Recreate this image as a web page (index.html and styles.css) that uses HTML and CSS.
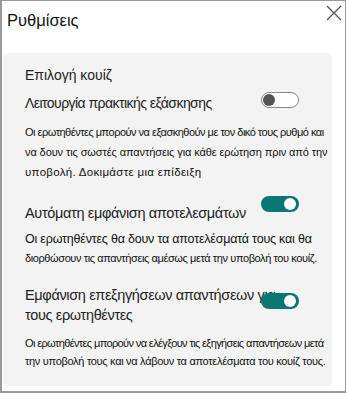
FILE: index.html
```html
<!DOCTYPE html>
<html lang="el">
<head>
<meta charset="utf-8">
<link rel="stylesheet" href="styles.css">
</head>
<body>
<div class="dialog">
  <div class="header">
    <h1 class="title">Ρυθμίσεις</h1>
    <button class="close" aria-label="Κλείσιμο">
      <svg width="16" height="16" viewBox="0 0 16 16"><path d="M1 1 L15 15 M15 1 L1 15" stroke="#555" stroke-width="1.3" fill="none"/></svg>
    </button>
  </div>
  <div class="panel">
    <div class="section-title">Επιλογή κουίζ</div>
    <div class="row row-1">
      <div class="label">Λειτουργία πρακτικής εξάσκησης</div>
      <span class="toggle toggle-off t1"><span class="knob"></span></span>
    </div>
    <p class="desc desc-1"><span class="ln l1a">Οι ερωτηθέντες μπορούν να εξασκηθούν με τον δικό τους ρυθμό και</span><span class="ln l1b">να δουν τις σωστές απαντήσεις για κάθε ερώτηση πριν από την</span><span class="ln l1c">υποβολή. Δοκιμάστε μια επίδειξη</span></p>
    <div class="row row-2">
      <div class="label">Αυτόματη εμφάνιση αποτελεσμάτων</div>
      <span class="toggle toggle-on t2"><span class="knob"></span></span>
    </div>
    <p class="desc desc-2"><span class="ln l2a">Οι ερωτηθέντες θα δουν τα αποτελέσματά τους και θα</span><span class="ln l2b">διορθώσουν τις απαντήσεις αμέσως μετά την υποβολή του κουίζ.</span></p>
    <div class="row row-3">
      <div class="label"><span class="ln">Εμφάνιση επεξηγήσεων απαντήσεων για</span><span class="ln">τους ερωτηθέντες</span></div>
      <span class="toggle toggle-on t3"><span class="knob"></span></span>
    </div>
    <p class="desc desc-3"><span class="ln l3a">Οι ερωτηθέντες μπορούν να ελέγξουν τις εξηγήσεις απαντήσεων μετά</span><span class="ln l3b">την υποβολή τους και να λάβουν τα αποτελέσματα του κουίζ τους.</span></p>
  </div>
</div>
</body>
</html>
```
FILE: styles.css
```css
html, body {
  margin: 0;
  padding: 0;
  background: #ffffff;
}
body {
  font-family: "Liberation Sans", Arial, sans-serif;
  color: #1b1b1b;
}
.dialog {
  width: 343px;
  height: 390px;
  border: 1px solid #9a9a9a;
  border-left-width: 2px;
  border-bottom-width: 2px;
  background: #fff;
  overflow: hidden;
}
.header {
  display: flex;
  justify-content: space-between;
  align-items: flex-start;
  height: 52px;
}
.title {
  margin: 8px 0 0 5px;
  font-size: 16.5px;
  line-height: 22px;
  font-weight: normal;
  color: #111;
}
.close {
  margin: 4px 3px 0 0;
  padding: 0;
  border: 0;
  background: none;
  width: 16px;
  height: 16px;
  display: flex;
}
.panel {
  margin: 0 13px 0 1px;
  background: #f3f3f3;
  border-radius: 5px;
  padding: 12px 0 16px 22px;
  overflow: hidden;
}
.ln {
  display: block;
  white-space: nowrap;
}
.section-title {
  font-size: 14px;
  line-height: 20px;
  color: #222;
}
.row {
  position: relative;
  margin-top: 8px;
}
.label {
  font-size: 14.5px;
  letter-spacing: -0.35px;
  line-height: 20px;
  color: #222;
}
.row-1 .label { font-size: 14px; letter-spacing: -0.55px; }
.row-2 { margin-top: 18px; }
.row-2 .label { position: relative; top: 3px; }
.row-3 { margin-top: 17px; }
.desc {
  margin: 9px 0 0 0;
  font-size: 11px;
  line-height: 20px;
  color: #111;
}
.l1a { letter-spacing: -0.5px; }
.l1b { letter-spacing: -0.1px; }
.l1c { font-size: 11.5px; letter-spacing: 0.3px; }
.desc-2 { margin-top: 10px; line-height: 19px; }
.l2a { font-size: 12.5px; letter-spacing: -0.2px; }
.l2b { font-size: 11px; letter-spacing: -0.4px; }
.desc-3 { margin-top: 9px; line-height: 18px; }
.l3a { font-size: 11px; letter-spacing: -0.62px; }
.l3b { font-size: 11px; letter-spacing: -0.3px; }
.toggle {
  position: absolute;
  left: 236px;
  width: 38px;
  height: 16px;
  border-radius: 9px;
  box-sizing: border-box;
}
.t1 { top: -1px; }
.t2 { top: -4px; }
.t3 { top: 8px; }
.toggle-off {
  border: 1.5px solid #8a8a8a;
  background: #fff;
}
.toggle-on {
  background: #077773;
}
.knob {
  position: absolute;
  top: 50%;
  width: 12px;
  height: 12px;
  border-radius: 50%;
  transform: translateY(-50%);
}
.toggle-off .knob {
  left: 1px;
  background: #555;
}
.toggle-on .knob {
  right: 3px;
  background: #fff;
}
```
